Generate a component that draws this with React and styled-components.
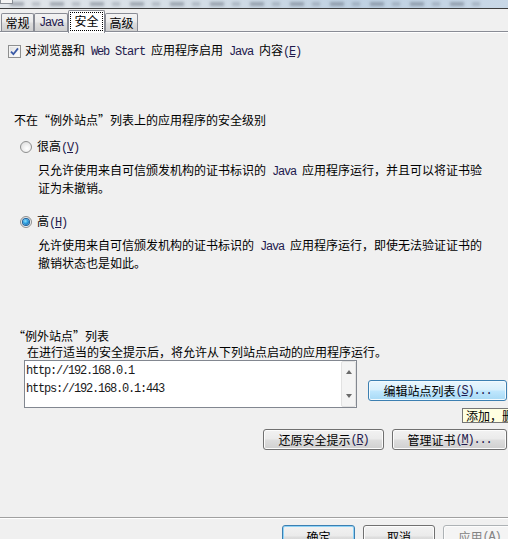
import React from "react";
import styled, { createGlobalStyle } from "styled-components";

const GlobalStyle = createGlobalStyle`
  html, body {
    margin: 0;
    padding: 0;
    background: #f0f0f0;
  }
  body {
    font-family: "Noto Sans CJK SC", "Liberation Sans", sans-serif;
    font-size: 12px;
    color: #000;
  }
`;

const Window = styled.div`
  width: 508px;
  height: 539px;
  overflow: hidden;
  display: flex;
  flex-direction: column;
  background: #f0f0f0;
  position: relative;
`;

const TitleStrip = styled.div`
  flex-shrink: 0;
  height: 8px;
  border-bottom: 1px solid #3d3d3d;
  position: relative;
  overflow: hidden;
  background: linear-gradient(to right, #e2e6ea 0%, #d3dde6 40%, #bfd1e2 70%, #c9d8e7 100%);
`;

const StripSmudge = styled.div`
  position: absolute;
  left: 10px;
  right: 20px;
  top: 2px;
  height: 4px;
  filter: blur(1.5px);
  background: repeating-linear-gradient(
    to right,
    rgba(70, 80, 95, 0.4) 0px,
    rgba(70, 80, 95, 0.4) 14px,
    transparent 14px,
    transparent 22px,
    rgba(70, 80, 95, 0.25) 22px,
    rgba(70, 80, 95, 0.25) 30px,
    transparent 30px,
    transparent 40px
  );
`;

const CornerBox = styled.div`
  position: absolute;
  left: 0;
  top: 0;
  width: 11px;
  height: 3px;
  border: 1px solid #8a8f96;
  border-top: none;
  background: #f4f4f4;
`;

const TabBar = styled.div`
  flex-shrink: 0;
  height: 22px;
  display: flex;
  align-items: flex-end;
  padding-left: 1px;
`;

const Tab = styled.div`
  box-sizing: border-box;
  width: ${(p) => p.$w}px;
  height: ${(p) => (p.$active ? 23 : 18)}px;
  margin-bottom: ${(p) => (p.$active ? -2 : 0)}px;
  border: 1px solid #898c95;
  border-bottom: none;
  border-radius: 2px 2px 0 0;
  background: ${(p) =>
    p.$active
      ? "#ffffff"
      : "linear-gradient(to bottom, #f3f3f3 0%, #ebebeb 45%, #dddddd 55%, #cfcfcf 100%)"};
  display: flex;
  align-items: center;
  justify-content: center;
  position: relative;
  z-index: ${(p) => (p.$active ? 2 : 1)};
  line-height: 16px;
  padding-top: ${(p) => (p.$active ? 0 : 1)}px;
`;

const FocusRect = styled.span`
  box-sizing: border-box;
  display: flex;
  align-items: center;
  justify-content: center;
  width: 33px;
  height: 19px;
  margin-top: -2px;
  border: 1px dotted #000;
`;

const Mono = styled.span`
  font-family: "Liberation Mono", "DejaVu Sans Mono", monospace;
  font-size: 12px;
  letter-spacing: -1.2px;
  color: ${(p) => p.$color || "#1f1a4d"};
  white-space: pre;
`;

const Quote = styled.span`
  display: inline-block;
  width: 12px;
  text-align: ${(p) => (p.$open ? "right" : "left")};
`;

const Panel = styled.div`
  flex: 1;
  position: relative;
  z-index: 0;
  border-top: 1px solid #898c95;
  box-shadow: inset 0 1px 0 #ffffff;
  padding: 0 1px 0 8px;
  display: flex;
  flex-direction: column;
  align-items: flex-start;
`;

const CheckRow = styled.div`
  margin-top: 11px;
  height: 16px;
  display: flex;
  align-items: center;
  gap: 4px;
  line-height: 16px;
  white-space: nowrap;
`;

const CheckBox = styled.span`
  box-sizing: border-box;
  width: 13px;
  height: 13px;
  border: 1px solid #8e8f8f;
  background: linear-gradient(135deg, #dcdcdc 0%, #f4f4f4 60%, #ffffff 100%);
  box-shadow: inset 0 0 0 1px #f4f4f4;
  display: flex;
  align-items: center;
  justify-content: center;
`;

const Text = styled.div`
  margin-top: ${(p) => p.$top || 0}px;
  margin-left: ${(p) => p.$left || 0}px;
  line-height: 16px;
  white-space: nowrap;
`;

const RadioRow = styled.div`
  margin-top: ${(p) => p.$top}px;
  margin-left: 12px;
  height: 16px;
  display: flex;
  align-items: center;
  gap: 5px;
  line-height: 16px;
`;

const RadioCircle = styled.span`
  box-sizing: border-box;
  width: 12px;
  height: 12px;
  border-radius: 50%;
  border: 1px solid #8e8f8f;
  background: radial-gradient(circle at 60% 65%, #ffffff 0%, #f0f0f0 40%, #d6d6d6 100%);
  display: flex;
  align-items: center;
  justify-content: center;
`;

const RadioDot = styled.span`
  width: 6px;
  height: 6px;
  border-radius: 50%;
  background: radial-gradient(circle at 40% 35%, #8fe0ff 0%, #2a9ee0 45%, #0d4f8c 100%);
  box-shadow: 0 0 0 1px #1b5f9c;
`;

const ListRow = styled.div`
  margin-left: 16px;
  display: flex;
  align-items: flex-start;
  gap: 11px;
  align-self: stretch;
`;

const ListBox = styled.div`
  box-sizing: border-box;
  width: 334px;
  height: 48px;
  border: 1px solid #828790;
  background: #ffffff;
  display: flex;
`;

const ListItems = styled.div`
  flex: 1;
  padding: 0 1px;
  line-height: 15px;
`;

const ScrollBar = styled.div`
  box-sizing: border-box;
  width: 15px;
  border: 1px solid #e2e2e2;
  border-radius: 2px;
  background: #f4f4f4;
  display: flex;
  flex-direction: column;
  justify-content: space-between;
  align-items: center;
  padding: 8px 0 8px;
`;

const Arrow = styled.span`
  width: 0;
  height: 0;
  border-left: 3.5px solid transparent;
  border-right: 3.5px solid transparent;
  ${(p) =>
    p.$down
      ? "border-top: 4px solid #6a6a6a;"
      : "border-bottom: 4px solid #6a6a6a;"}
`;

const Button = styled.div`
  box-sizing: border-box;
  width: ${(p) => p.$w}px;
  height: ${(p) => p.$h || 21}px;
  margin-top: ${(p) => p.$top || 0}px;
  border: 1px solid
    ${(p) => (p.$hot || p.$focus ? "#3c7fb1" : p.$disabled ? "#adb2b5" : "#707070")};
  border-radius: 3px;
  background: ${(p) =>
    p.$hot
      ? "linear-gradient(to bottom, #eaf6fd 0%, #d9f0fc 45%, #bee6fd 55%, #a7d9f5 100%)"
      : p.$disabled
      ? "#f4f4f4"
      : "linear-gradient(to bottom, #f2f2f2 0%, #ebebeb 45%, #dddddd 55%, #cfcfcf 100%)"};
  box-shadow: inset 0 0 0 1px
    ${(p) => (p.$focus ? "#8fd3f7" : p.$hot ? "#f2fafe" : "#fcfcfc")};
  color: ${(p) => (p.$disabled ? "#838383" : "#000")};
  display: flex;
  align-items: ${(p) => (p.$clipped ? "flex-start" : "center")};
  padding-top: ${(p) => (p.$clipped ? 3 : 0)}px;
  justify-content: center;
  line-height: 16px;
  white-space: nowrap;
  flex-shrink: 0;
`;

const ButtonRow = styled.div`
  align-self: flex-end;
  margin-top: 21px;
  display: flex;
  gap: 8px;
`;

const Tooltip = styled.div`
  position: absolute;
  left: 462px;
  top: 376px;
  height: 15px;
  box-sizing: border-box;
  padding: 0 3px;
  border: 1px solid #767676;
  background: #ffffe1;
  line-height: 13px;
  white-space: nowrap;
  z-index: 5;
`;

const Footer = styled.div`
  flex-shrink: 0;
  height: 22px;
  border-top: 1px solid #a0a0a0;
  box-shadow: inset 0 1px 0 #ffffff;
  display: flex;
  justify-content: flex-end;
  align-items: flex-start;
  padding-top: 7px;
  box-sizing: border-box;
`;

const FooterButtons = styled.div`
  display: flex;
  gap: 8px;
  margin-right: -8px;
`;

const Key = ({ k, color }) => (
  <Mono $color={color}>
    (<u>{k}</u>)
  </Mono>
);

const CheckMark = () => (
  <svg width="9" height="9" viewBox="0 0 9 9">
    <path d="M1 4.6 L3.4 7.2 L8 1.4" fill="none" stroke="#3a5aa6" strokeWidth="1.8" />
  </svg>
);

const Radio = ({ checked }) => (
  <RadioCircle>{checked ? <RadioDot /> : null}</RadioCircle>
);

export default function App() {
  return (
    <Window>
      <GlobalStyle />
      <TitleStrip>
        <StripSmudge />
        <CornerBox />
      </TitleStrip>
      <TabBar>
        <Tab $w={33}>常规</Tab>
        <Tab $w={34}>
          <Mono>Java</Mono>
        </Tab>
        <Tab $w={37} $active>
          <FocusRect>安全</FocusRect>
        </Tab>
        <Tab $w={33}>高级</Tab>
      </TabBar>
      <Panel>
        <CheckRow>
          <CheckBox>
            <CheckMark />
          </CheckBox>
          <span>
            对浏览器和<Mono> Web Start </Mono>应用程序启用<Mono> Java </Mono>内容
            <Key k="E" />
          </span>
        </CheckRow>

        <Text $top={53} $left={6}>
          不在<Quote $open>“</Quote>例外站点<Quote>”</Quote>列表上的应用程序的安全级别
        </Text>

        <RadioRow $top={11}>
          <Radio />
          <span>
            很高
            <Key k="V" />
          </span>
        </RadioRow>
        <Text $top={7} $left={30}>
          只允许使用来自可信颁发机构的证书标识的<Mono> Java </Mono>应用程序运行，并且可以将证书验
          <br />
          证为未撤销。
        </Text>

        <RadioRow $top={18}>
          <Radio checked />
          <span>
            高
            <Key k="H" />
          </span>
        </RadioRow>
        <Text $top={7} $left={30}>
          允许使用来自可信颁发机构的证书标识的<Mono> Java </Mono>应用程序运行，即使无法验证证书的
          <br />
          撤销状态也是如此。
        </Text>

        <Text $top={57} $left={5}>
          <Quote $open>“</Quote>例外站点<Quote>”</Quote>列表
        </Text>
        <Text $left={19}>在进行适当的安全提示后，将允许从下列站点启动的应用程序运行。</Text>

        <ListRow>
          <ListBox>
            <ListItems>
              <div>
                <Mono $color="#1a1a1a">http://192.168.0.1</Mono>
              </div>
              <div>
                <Mono $color="#1a1a1a">https://192.168.0.1:443</Mono>
              </div>
            </ListItems>
            <ScrollBar>
              <Arrow />
              <Arrow $down />
            </ScrollBar>
          </ListBox>
          <Button $w={139} $top={20} $hot>
            编辑站点列表
            <Key k="S" />
            <Mono>...</Mono>
          </Button>
        </ListRow>

        <ButtonRow>
          <Button $w={121}>
            还原安全提示
            <Key k="R" />
          </Button>
          <Button $w={115}>
            管理证书
            <Key k="M" />
            <Mono>...</Mono>
          </Button>
        </ButtonRow>

        <Tooltip>添加，删除或编辑例外站点列表中的项目。</Tooltip>
      </Panel>
      <Footer>
        <FooterButtons>
          <Button $w={73} $h={23} $focus $clipped>
            确定
          </Button>
          <Button $w={72} $h={23} $clipped>
            取消
          </Button>
          <Button $w={73} $h={23} $disabled $clipped>
            应用
            <Key k="A" color="#838383" />
          </Button>
        </FooterButtons>
      </Footer>
    </Window>
  );
}
